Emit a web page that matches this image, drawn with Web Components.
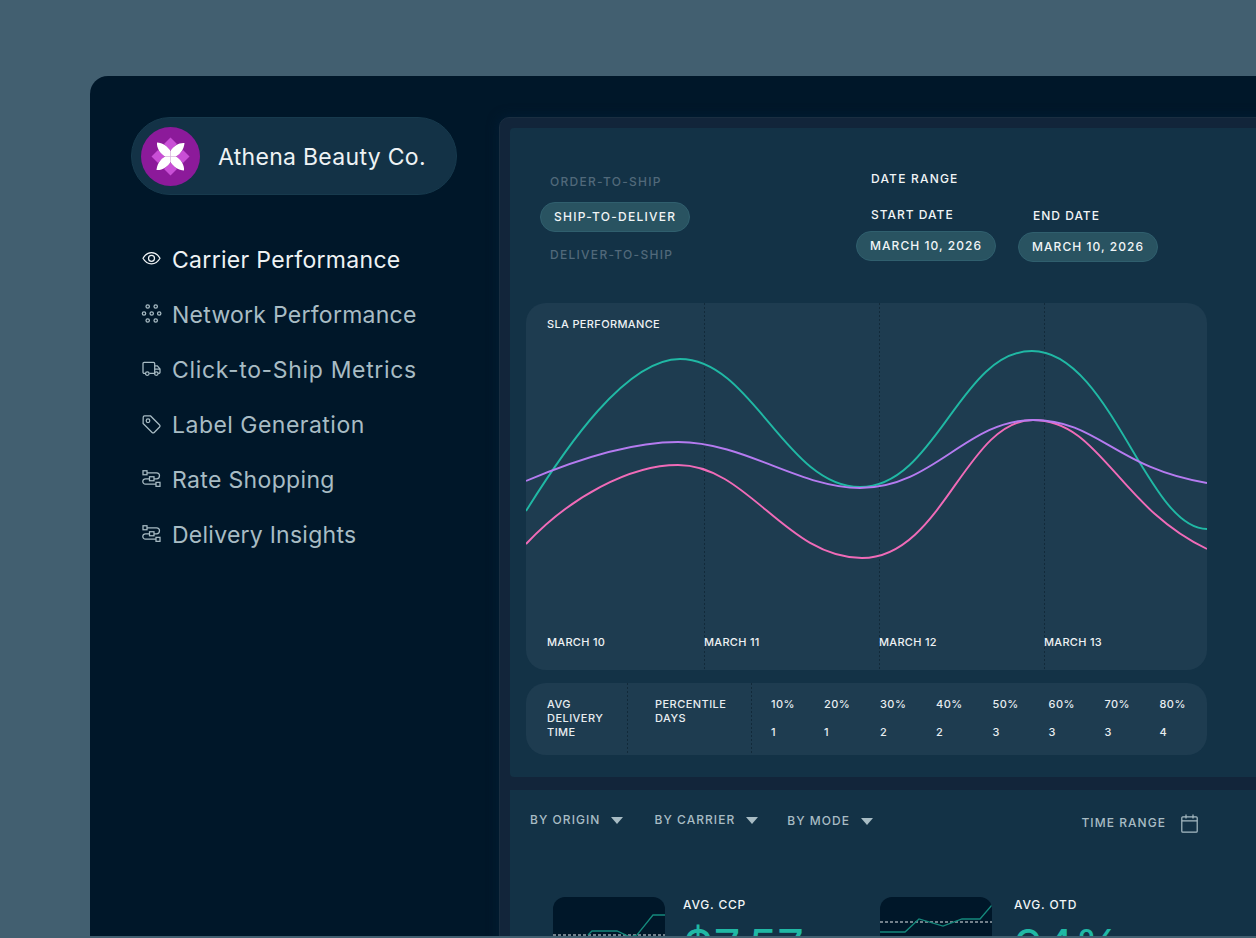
<!DOCTYPE html>
<html><head><meta charset="utf-8">
<style>
html,body{margin:0;height:938px;overflow:hidden;background:#425f70;font-family:Inter,"Liberation Sans",sans-serif;}
app-shell{display:block;padding:76px 0 0 90px;}
</style></head><body>
<app-shell>
  <side-bar slot="side">
    <brand-pill>Athena Beauty Co.</brand-pill>
    <nav-item icon="eye" active style="letter-spacing:.31px">Carrier Performance</nav-item>
    <nav-item icon="dots" style="letter-spacing:.26px">Network Performance</nav-item>
    <nav-item icon="truck" style="letter-spacing:.66px">Click-to-Ship Metrics</nav-item>
    <nav-item icon="tag" style="letter-spacing:.48px">Label Generation</nav-item>
    <nav-item icon="route" style="letter-spacing:.34px">Rate Shopping</nav-item>
    <nav-item icon="route" style="letter-spacing:.25px">Delivery Insights</nav-item>
  </side-bar>
  <sla-panel slot="main"></sla-panel>
  <metrics-panel slot="main"></metrics-panel>
</app-shell>
<script>
function make(name, html){
  customElements.define(name, class extends HTMLElement{
    constructor(){super();this.attachShadow({mode:'open'}).innerHTML=typeof html==='function'?html(this):html;}
  });
}
const ICONS={
 eye:'<path d="M1 8.5C3.2 4.7 6 2.9 9.5 2.9S15.8 4.7 18 8.5c-2.2 3.8-5 5.6-8.5 5.6S3.2 12.3 1 8.5Z"/><circle cx="9.5" cy="8.5" r="3"/>',
 dots:'<circle cx="5.7" cy="1.75" r="1.7"/><circle cx="13.7" cy="1.75" r="1.7"/><circle cx="2" cy="8.75" r="1.7"/><circle cx="9.7" cy="8.75" r="1.7"/><circle cx="17.2" cy="8.75" r="1.7"/><circle cx="5.7" cy="15.75" r="1.7"/><circle cx="13.7" cy="15.75" r="1.7"/>',
 truck:'<path d="M3.2 13.6H2.2a1.2 1.2 0 0 1-1.2-1.2V3.8a1.2 1.2 0 0 1 1.2-1.2h9.3a1.2 1.2 0 0 1 1.2 1.2v9.8H7.4"/><path d="M12.7 6h2.6l2.7 3.2v3.2a1.2 1.2 0 0 1-1.2 1.2h-.6M12.7 13.6h-.1M12.7 9.4H18"/><circle cx="5.3" cy="13.8" r="1.8"/><circle cx="14.3" cy="13.8" r="1.8"/>',
 tag:'<path d="M1.2 2.6A1.4 1.4 0 0 1 2.6 1.2h6l9 9a1.5 1.5 0 0 1 0 2.1l-5.4 5.4a1.5 1.5 0 0 1-2.1 0l-9-9Z"/><circle cx="6" cy="6" r="1.8"/>',
 route:'<rect x="1" y="1" width="4" height="4"/><rect x="7.5" y="7" width="4.5" height="4"/><rect x="14" y="12.6" width="4" height="4"/><path d="M5 3h9.5a3 3 0 0 1 3 3 3 3 0 0 1-3 3H12M7.5 9H3.5a2.7 2.7 0 0 0-2.7 2.7 2.7 2.7 0 0 0 2.7 2.7H14"/>'
};
const PETAL='M0-5.5C-3-10.5-8-13.5-13.5-14-14-8.5-10.5-3-5.5 0L0 0Z';
const DIA='M0-19 6.5-12.5 0-6-6.5-12.5Z';
make('brand-pill',`<style>
:host{display:flex;align-items:center;box-sizing:border-box;width:326px;height:78px;border-radius:39px;background:#133246;border:1px solid #173a4d;padding-left:9px;margin-bottom:36px;}
svg{width:59px;height:59px;flex:none;display:block}
span{margin-left:18px;padding-top:2px;font-size:23px;letter-spacing:.3px;color:#eef2f4;white-space:nowrap}
</style>
<svg viewBox="-29.5 -29.5 59 59">
<circle r="29.5" fill="#8c1a9a"/>
<g fill="#c94fd6">${[0,90,180,270].map(a=>`<path d="${DIA}" transform="rotate(${a})"/>`).join('')}</g>
<g fill="#fff">${[0,90,180,270].map(a=>`<path d="${PETAL}" transform="rotate(${a})"/>`).join('')}</g>
</svg><span><slot></slot></span>`);
make('nav-item',el=>`<style>
:host{display:flex;align-items:center;box-sizing:border-box;height:55px;padding:0 0 0 11px;font-size:23px;letter-spacing:.42px;color:${el.hasAttribute('active')?'#eef2f4':'#a8bcc4'};white-space:nowrap}
svg{width:19px;height:19px;flex:none;margin-right:11px;fill:none;stroke:currentColor;stroke-width:1.25;overflow:visible}
span{position:relative;top:1px}
</style><svg viewBox="0 0 19 17.5">${ICONS[el.getAttribute('icon')]}</svg><span><slot></slot></span>`);
make('side-bar',`<style>
:host{display:block;box-sizing:border-box;width:409px;flex:none;padding:41px 0 0 41px}
</style><slot></slot>`);
make('app-shell',`<style>
:host{box-sizing:border-box}
.win{display:flex;width:1300px;height:860px;background:#001729;border-radius:18px 0 0 0;overflow:hidden}
.main{width:780px;flex:none;margin-top:41px;padding:10px;background:#12253a;border:1px solid #1a2e40;border-radius:10px 0 0 0;box-sizing:border-box;height:900px;display:flex;flex-direction:column;gap:13px;box-shadow:0 0 12px #011e36}
</style><div class="win"><slot name="side"></slot><div class="main"><slot name="main"></slot></div></div>`);
make('x-pill',`<style>
:host{display:inline-flex;align-items:center;box-sizing:border-box;height:30px;padding:0 13px 1px;border-radius:15px;background:#295361;border:1px solid #305f6e;color:#f1f5f6;font-size:12px;font-weight:500;letter-spacing:1.05px;white-space:nowrap}
</style><slot></slot>`);
make('sla-chart',`<style>
:host{display:block;position:relative;height:367px;background:#1e3c50;border-radius:20px;overflow:hidden;color:#eef2f4;font-size:11px;font-weight:500;letter-spacing:.3px}
.cols{display:grid;grid-template-columns:178px 175px 165px 1fr;height:100%}
.col{display:flex;flex-direction:column;justify-content:flex-end;padding-bottom:21px;height:100%;box-sizing:border-box;background:linear-gradient(#122a3a 50%,transparent 50%) left top/1px 4px repeat-y}
.col:first-child{background:none;padding-left:21px}
.t{position:absolute;left:21px;top:14px;letter-spacing:.35px}
span{line-height:14px;white-space:nowrap}
svg{position:absolute;left:0;top:0;width:681px;height:367px;fill:none;stroke-width:1.9}
</style>
<div class="cols"><div class="col"><span>MARCH 10</span></div><div class="col"><span>MARCH 11</span></div><div class="col"><span>MARCH 12</span></div><div class="col"><span>MARCH 13</span></div></div>
<span class="t">SLA PERFORMANCE</span>
<svg viewBox="526 303 681 367">
<path stroke="#20b8a4" d="M526 511C566 447 626 359 680 359C752 359 786 487 860 487C936 487 960 351 1032 351C1110 351 1147 529 1207 529"/>
<path stroke="#f06bb8" d="M526 544C570 497 630 465 678 465C748 465 786 558 862 558C942 558 966 420 1033 420C1100 420 1118 507 1207 549"/>
<path stroke="#b57bf0" d="M526 481C580 458 632 442 678 442C744 442 800 488 860 488C934 488 966 420 1033 420C1098 420 1115 468 1207 483"/>
</svg>`);
make('stats-table',`<style>
:host{display:grid;grid-template-columns:101px 124px 1fr;height:72px;background:#1e3c50;border-radius:20px;overflow:hidden;color:#e8edf0;font-size:11px;font-weight:500;letter-spacing:.45px;line-height:14px}
.c{padding:14px 0 0 21px;box-sizing:border-box;height:100%}
.c+.c{background:linear-gradient(#122a3a 50%,transparent 50%) left top/1px 4px repeat-y;padding-left:28px}
.c.g{display:grid;grid-template-columns:53px 56px 56px 56.5px 56px 56px 55px 1fr;row-gap:14px;padding:14px 0 0 20px;align-content:start}
</style>
<div class="c">AVG<br>DELIVERY<br>TIME</div>
<div class="c">PERCENTILE<br>DAYS</div>
<div class="c g"><span>10%</span><span>20%</span><span>30%</span><span>40%</span><span>50%</span><span>60%</span><span>70%</span><span>80%</span><span>1</span><span>1</span><span>2</span><span>2</span><span>3</span><span>3</span><span>3</span><span>4</span></div>`);
make('sla-panel',`<style>
:host{display:block;background:#133246;padding:0 0 22px 16px;border-radius:4px 0 0 4px;flex:none}
.head{display:flex;height:175px;box-sizing:border-box;color:#f1f5f6;font-size:12px;font-weight:500;letter-spacing:1px}
.left{width:330px;flex:none;box-sizing:border-box;padding:44px 0 0 14px;display:flex;flex-direction:column;align-items:flex-start}
.m{color:#51697a;line-height:20px;padding-left:10px;white-space:nowrap;letter-spacing:1.28px}
x-pill{margin:10px 0 13px;letter-spacing:1.25px}
.right{padding-top:41px;display:grid;grid-template-columns:140px 140px;column-gap:22px;align-content:start}
.l{line-height:20px;padding-left:15px;white-space:nowrap}
.r{grid-column:1/3;margin-bottom:16px;letter-spacing:1.2px}
.d{display:flex;flex-direction:column;gap:6px}
.e{margin-top:1px}
.d x-pill{margin:0;letter-spacing:1.05px}
sla-chart{margin-right:calc(100% - 681px)}
stats-table{margin:13px calc(100% - 681px) 0 0}
</style>
<div class="head"><div class="left"><span class="m">ORDER-TO-SHIP</span><x-pill>SHIP-TO-DELIVER</x-pill><span class="m">DELIVER-TO-SHIP</span></div>
<div class="right"><div class="l r">DATE RANGE</div>
<div class="d"><div class="l">START DATE</div><x-pill>MARCH 10, 2026</x-pill></div>
<div class="d e"><div class="l">END DATE</div><x-pill>MARCH 10, 2026</x-pill></div></div></div>
<sla-chart></sla-chart><stats-table></stats-table>`);
make('filter-item',`<style>
:host{display:flex;align-items:center;gap:11px;font-size:12px;font-weight:500;letter-spacing:1.05px;color:#a8bcc4;line-height:20px;white-space:nowrap}
svg{width:12px;height:7px;fill:#a8bcc4}
</style><slot></slot><svg viewBox="0 0 12 7"><path d="M0 0H12L6 7Z"/></svg>`);
make('kpi-card',el=>`<style>
:host{display:flex;width:327px;flex:none;color:#f1f5f6}
.th{width:112px;height:60px;flex:none;background:#001729;border-radius:12px;overflow:hidden}
svg{display:block;width:112px;height:60px;fill:none}
.n{margin-left:${el.getAttribute('gap')}px}
.t{font-size:12px;font-weight:500;letter-spacing:.8px;line-height:16px;white-space:nowrap}
.v{font-size:47px;font-weight:400;letter-spacing:.5px;color:#20b8a4;line-height:50px;margin-top:8px;white-space:nowrap}
</style><div class="th"><svg viewBox="0 0 112 60"><path d="M0 ${el.getAttribute('dy')}H112" stroke="#e4eaee" stroke-width="1" stroke-dasharray="3 2"/><polyline stroke="#14897c" stroke-width="1.3" points="${el.getAttribute('pts')}"/></svg></div>
<div class="n"><div class="t">${el.getAttribute('label')}</div><div class="v">${el.getAttribute('value')}</div></div>`);
make('metrics-panel',`<style>
:host{display:block;background:#133246;padding:20px 0 0 20px;flex:1}
.f{display:flex;width:668px;align-items:flex-start}
filter-item:nth-child(2){margin-left:31px}
filter-item:nth-child(3){margin-left:29px;margin-top:1px}
.tr{margin-left:auto;display:flex;align-items:center;gap:15px;font-size:12px;font-weight:500;letter-spacing:1.05px;color:#a8bcc4;line-height:24px;padding-top:1px}
.tr svg{width:17px;height:19px;fill:none;stroke:#a8bcc4;stroke-width:1.2}
.k{display:flex;margin:62px 0 0 23px}
</style>
<div class="f"><filter-item>BY ORIGIN</filter-item><filter-item>BY CARRIER</filter-item><filter-item>BY MODE</filter-item>
<div class="tr">TIME RANGE<svg viewBox="0 0 17 19"><rect x=".8" y="2.8" width="15.4" height="15.4" rx="1"/><path d="M.8 6.8H16.2M5 .6V4.4M12 .6V4.4"/></svg></div></div>
<div class="k"><kpi-card gap="18" label="AVG. CCP" value="$7.57" dy="38" pts="35,38 39,34 64,34 77,40 84,38 100,18 112,18"></kpi-card>
<kpi-card gap="22" label="AVG. OTD" value="94%" dy="25" pts="0,35 25,35 39,22 63,29 82,22 100,22 112,8"></kpi-card></div>`);
</script>
</body></html>
